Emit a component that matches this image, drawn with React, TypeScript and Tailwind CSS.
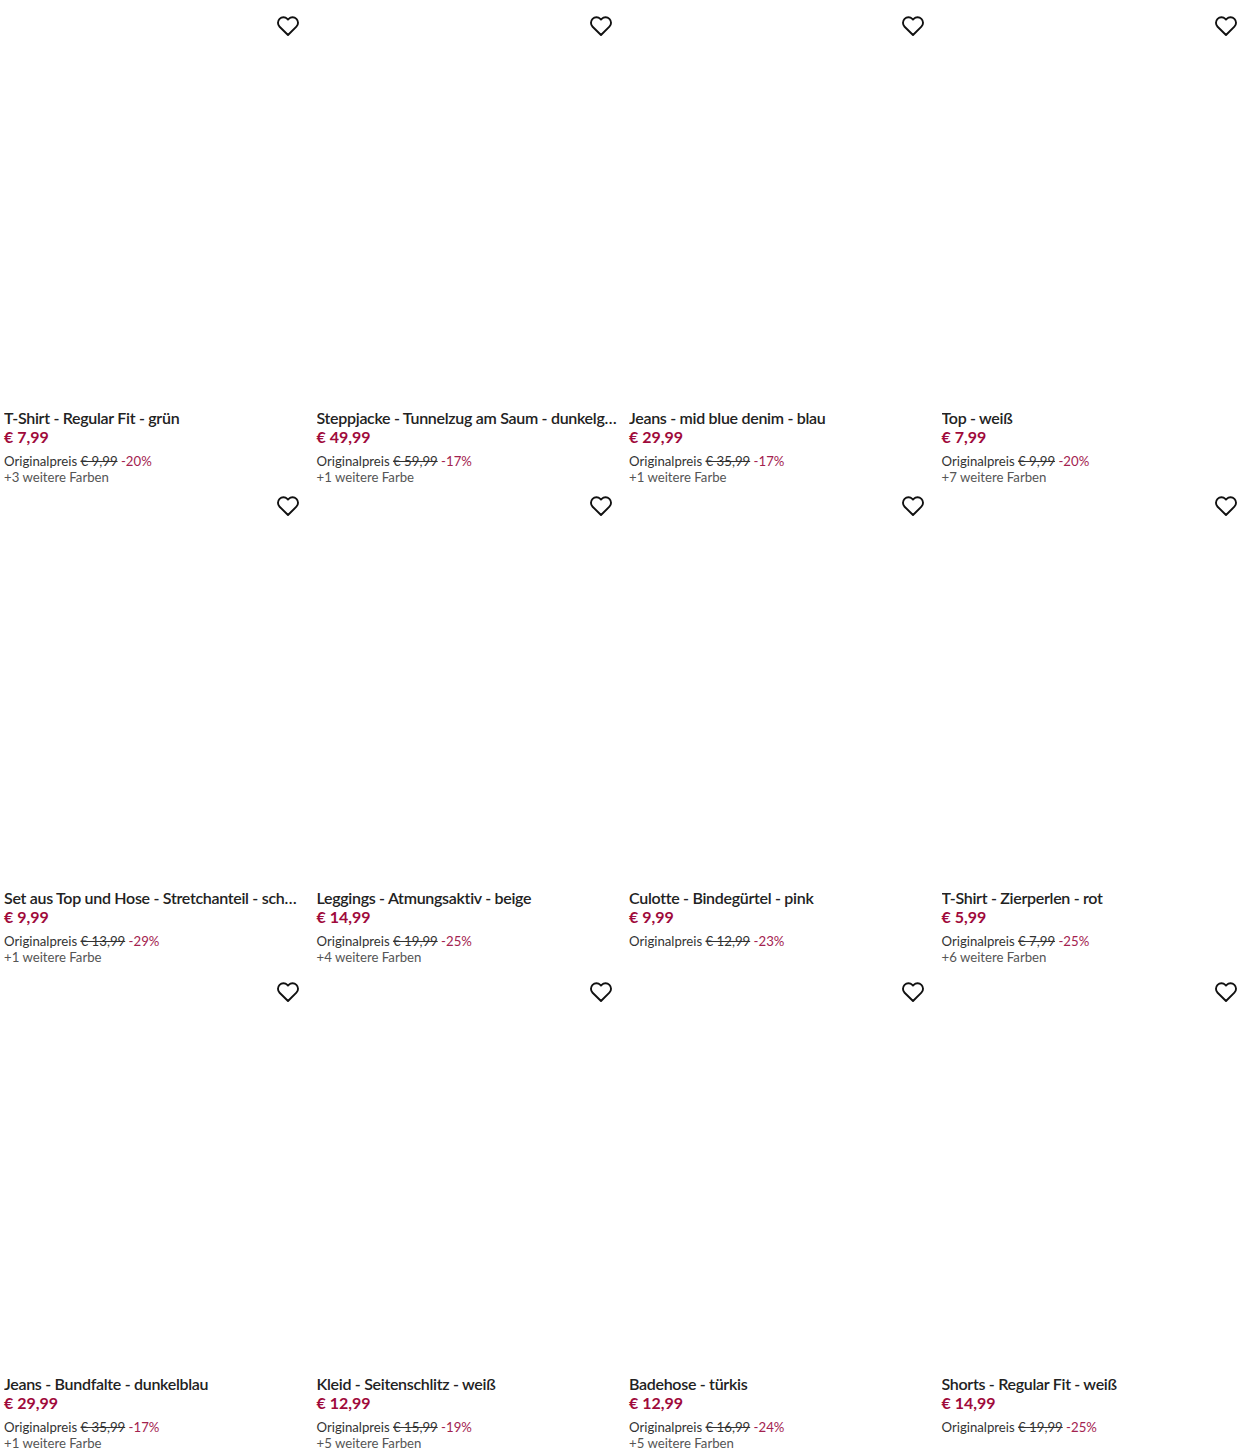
import React from "react";

type Product = {
  title: string;
  price: string;
  original: string;
  discount: string;
  colors?: string;
};

const rows: { height: string; products: Product[] }[] = [
  {
    height: "h-[480px]",
    products: [
      { title: "T-Shirt - Regular Fit - grün", price: "€ 7,99", original: "€ 9,99", discount: "-20%", colors: "+3 weitere Farben" },
      { title: "Steppjacke - Tunnelzug am Saum - dunkelgrün", price: "€ 49,99", original: "€ 59,99", discount: "-17%", colors: "+1 weitere Farbe" },
      { title: "Jeans - mid blue denim - blau", price: "€ 29,99", original: "€ 35,99", discount: "-17%", colors: "+1 weitere Farbe" },
      { title: "Top - weiß", price: "€ 7,99", original: "€ 9,99", discount: "-20%", colors: "+7 weitere Farben" },
    ],
  },
  {
    height: "h-[486px]",
    products: [
      { title: "Set aus Top und Hose - Stretchanteil - schwarz", price: "€ 9,99", original: "€ 13,99", discount: "-29%", colors: "+1 weitere Farbe" },
      { title: "Leggings - Atmungsaktiv - beige", price: "€ 14,99", original: "€ 19,99", discount: "-25%", colors: "+4 weitere Farben" },
      { title: "Culotte - Bindegürtel - pink", price: "€ 9,99", original: "€ 12,99", discount: "-23%" },
      { title: "T-Shirt - Zierperlen - rot", price: "€ 5,99", original: "€ 7,99", discount: "-25%", colors: "+6 weitere Farben" },
    ],
  },
  {
    height: "h-[481px]",
    products: [
      { title: "Jeans - Bundfalte - dunkelblau", price: "€ 29,99", original: "€ 35,99", discount: "-17%", colors: "+1 weitere Farbe" },
      { title: "Kleid - Seitenschlitz - weiß", price: "€ 12,99", original: "€ 15,99", discount: "-19%", colors: "+5 weitere Farben" },
      { title: "Badehose - türkis", price: "€ 12,99", original: "€ 16,99", discount: "-24%", colors: "+5 weitere Farben" },
      { title: "Shorts - Regular Fit - weiß", price: "€ 14,99", original: "€ 19,99", discount: "-25%" },
    ],
  },
];

const Heart = () => (
  <svg viewBox="0 0 24 24" fill="none" stroke="#111111" strokeWidth="1.9" strokeLinejoin="round" className="h-6 w-6">
    <path d="M12 21 3.6 12.7a5.6 5.6 0 0 1 0-7.9 5.4 5.4 0 0 1 7.7 0l.7.8.7-.8a5.4 5.4 0 0 1 7.7 0 5.6 5.6 0 0 1 0 7.9L12 21Z" />
  </svg>
);

const ProductCard: React.FC<{ product: Product }> = ({ product }) => (
  <div className="flex h-full flex-col pl-1 pr-[12.5px]">
    <div className="flex h-[402.5px] shrink-0 justify-end pt-[9px]">
      <Heart />
    </div>
    <p className="-mr-[7px] truncate text-[16px] leading-[20px] font-semibold tracking-[-0.3px] text-[#222222]">{product.title}</p>
    <p className="text-[16px] leading-[18px] font-bold text-[#9f0a3b]">{product.price}</p>
    <p className="mt-[7px] text-[13.2px] leading-4 text-[#333333]">
      Originalpreis <span className="line-through">{product.original}</span>{" "}
      <span className="text-[#a3224f]">{product.discount}</span>
    </p>
    {product.colors && <p className="text-[13.2px] leading-4 text-[#555555]">{product.colors}</p>}
  </div>
);

export default function App() {
  return (
    <div className="h-[1452px] overflow-hidden bg-white pt-[5px] font-['Lato','Open_Sans',sans-serif]">
      {rows.map((row, i) => (
        <div key={i} className={`grid grid-cols-4 ${row.height}`}>
          {row.products.map((product) => (
            <ProductCard key={product.title} product={product} />
          ))}
        </div>
      ))}
    </div>
  );
}
